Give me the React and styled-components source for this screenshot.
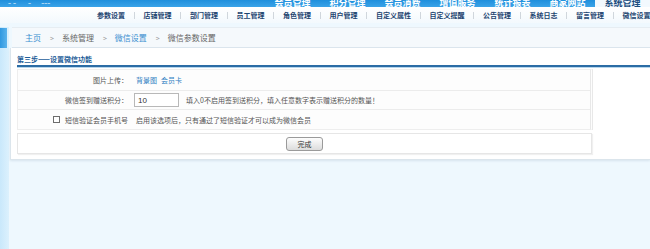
import styled, { createGlobalStyle } from 'styled-components';

const topTabs = ['会员管理', '积分管理', '会员消费', '增值服务', '统计报表', '商家网站', '系统管理'];
const subItems = ['参数设置', '店铺管理', '部门管理', '员工管理', '角色管理', '用户管理', '自定义属性', '自定义提醒', '公告管理', '系统日志', '留言管理', '微信设置'];

const App = () => {
  return (
    <Page>
      <GlobalStyle />
      <TopNav>
        <LogoBits>ˍ ˍ&nbsp;&nbsp;&nbsp;&nbsp;&nbsp;&nbsp;ˍ&nbsp;&nbsp;&nbsp;&nbsp;&nbsp;ˍˍˍ</LogoBits>
        {topTabs.map((t, i) => (
          <TopTab key={t} $active={i === topTabs.length - 1}>{t}</TopTab>
        ))}
      </TopNav>
      <SubNav>
        {subItems.map((t, i) => (
          <SubItem key={t} $first={i === 0}>{t}</SubItem>
        ))}
      </SubNav>
      <Body>
        <SideStrip>
          <SideToggle />
        </SideStrip>
        <Main>
          <Crumbs>
            <CrumbLink>主页</CrumbLink>
            <Arrow>&gt;</Arrow>
            <span>系统管理</span>
            <Arrow>&gt;</Arrow>
            <CrumbLink>微信设置</CrumbLink>
            <Arrow>&gt;</Arrow>
            <span>微信参数设置</span>
          </Crumbs>
          <Panel>
            <StepTitle>第三步——设置微信功能</StepTitle>
            <FormTable>
              <Row $h={20}>
                <Label>图片上传：</Label>
                <Value>
                  <Link>背景图</Link>
                  <Link>会员卡</Link>
                </Value>
              </Row>
              <Row $h={18}>
                <Label>微信签到赠送积分：</Label>
                <Value>
                  <Input defaultValue="10" />
                  <Hint>填入0不启用签到送积分，填入任意数字表示赠送积分的数量！</Hint>
                </Value>
              </Row>
              <Row $h={19} $last>
                <Label>
                  <Check />
                  短信验证会员手机号
                </Label>
                <Value>启用该选项后，只有通过了短信验证才可以成为微信会员</Value>
              </Row>
            </FormTable>
            <ActionBox>
              <Button>完成</Button>
            </ActionBox>
          </Panel>
        </Main>
      </Body>
    </Page>
  );
};

export default App;

const GlobalStyle = createGlobalStyle`
  html, body {
    margin: 0;
    padding: 0;
  }
  body {
    width: 650px;
    height: 249px;
    overflow: hidden;
    background: #eef8fe;
    font-family: "Noto Sans CJK SC", "Liberation Sans", sans-serif;
  }
`;

const Page = styled.div`
  width: 650px;
  height: 249px;
  display: flex;
  flex-direction: column;
  overflow: hidden;
`;

const TopNav = styled.div`
  height: 7px;
  flex: none;
  display: flex;
  align-items: flex-end;
  overflow: hidden;
  background: linear-gradient(#1f8fdc, #3aa3e8);
  padding-left: 8px;
`;

const LogoBits = styled.span`
  width: 269px;
  color: #e8f5ff;
  font-size: 9px;
  line-height: 9px;
  margin-bottom: 3px;
  white-space: pre;
`;

const TopTab = styled.span`
  width: 55px;
  flex: none;
  text-align: center;
  font-size: 9px;
  font-weight: bold;
  line-height: 12px;
  margin-bottom: -2px;
  color: ${(p) => (p.$active ? '#1d4e7e' : '#ffffff')};
  background: ${(p) => (p.$active ? '#f2f9fe' : 'transparent')};
  border-radius: 3px 3px 0 0;
`;

const SubNav = styled.div`
  height: 16px;
  flex: none;
  display: flex;
  align-items: center;
  padding-left: 97px;
  background: linear-gradient(#ffffff, #f3f9fd);
  white-space: nowrap;
`;

const SubItem = styled.span`
  display: flex;
  align-items: center;
  font-size: 7px;
  font-weight: bold;
  color: #1c4470;

  &::before {
    content: '';
    display: ${(p) => (p.$first ? 'none' : 'block')};
    width: 1px;
    height: 7px;
    background: #d0d6dc;
    margin: 0 9px 0 8.5px;
  }
`;

const Body = styled.div`
  flex: 1;
  display: flex;
`;

const SideStrip = styled.div`
  width: 9px;
  flex: none;
  margin-top: 4px;
  background: linear-gradient(90deg, #c9e8fb, #dcf1fd);
`;

const SideToggle = styled.div`
  width: 7px;
  height: 20px;
  margin-top: 1px;
  background: linear-gradient(90deg, #2f98e0, #5ab3ec);
`;

const Main = styled.div`
  flex: 1;
  display: flex;
  flex-direction: column;
  padding-left: 1px;
`;

const Crumbs = styled.div`
  margin-top: 4px;
  margin-left: 2px;
  height: 19px;
  display: flex;
  align-items: center;
  padding-left: 13px;
  background: #f5f9fc;
  border-top: 1px solid #e6edf2;
  border-bottom: 1px solid #dce6ed;
  font-size: 8px;
  color: #666;
`;

const CrumbLink = styled.span`
  color: #3a8fd0;
`;

const Arrow = styled.span`
  margin: 0 8px 0 9px;
  color: #999;
  font-size: 7px;
`;

const Panel = styled.div`
  background: #ffffff;
  border-left: 1px solid #dbe5ec;
  border-bottom: 1px solid #dbe5ec;
  box-shadow: 0 1px 2px #d6e4ee;
  padding: 5px 0 5px 6px;
`;

const StepTitle = styled.div`
  height: 12px;
  line-height: 12px;
  font-size: 7px;
  font-weight: bold;
  color: #1d5d98;
  border-bottom: 2px solid #2b6ca5;
  box-shadow: 0 1px 0 #b7d6ec;
`;

const FormTable = styled.div`
  margin-top: 2px;
  width: 572px;
  border: 1px solid #eeeeee;
  border-right: 3px double #e8e8e8;
  background: #fdfdfd;
`;

const Row = styled.div`
  height: ${(p) => p.$h}px;
  display: grid;
  grid-template-columns: 113px 1fr;
  align-items: center;
  border-bottom: ${(p) => (p.$last ? 'none' : '1px solid #ececec')};
  font-size: 7px;
  color: #555;
`;

const Label = styled.div`
  display: flex;
  align-items: center;
  justify-content: flex-end;
  padding-right: 3px;
  white-space: nowrap;
`;

const Check = styled.span`
  width: 5px;
  height: 5px;
  border: 1px solid #6d6d6d;
  background: #fff;
  margin-right: 5px;
`;

const Value = styled.div`
  display: flex;
  align-items: center;
  padding-left: 5px;
  white-space: nowrap;
`;

const Link = styled.span`
  color: #2e7ec2;
  margin-right: 4px;
`;

const Input = styled.input`
  box-sizing: border-box;
  width: 45px;
  height: 14px;
  margin: 0 0 0 -2px;
  padding: 0 3px;
  border: 1px solid #b8b8b8;
  font-size: 8px;
  font-family: "Liberation Sans", sans-serif;
  color: #333;
  outline: none;
`;

const Hint = styled.span`
  margin-left: 7px;
`;

const ActionBox = styled.div`
  margin-top: 3px;
  width: 573px;
  height: 19px;
  display: flex;
  align-items: center;
  justify-content: center;
  border: 1px solid #e6e6e6;
  box-shadow: 1px 1px 1px #f0f0f0;
`;

const Button = styled.button`
  width: 37px;
  height: 14px;
  padding: 0;
  font-size: 7px;
  font-family: "Noto Sans CJK SC", sans-serif;
  color: #333;
  border: 1px solid #9a9a9a;
  border-radius: 3px;
  background: linear-gradient(#fdfdfd, #dcdcdc);
`;
